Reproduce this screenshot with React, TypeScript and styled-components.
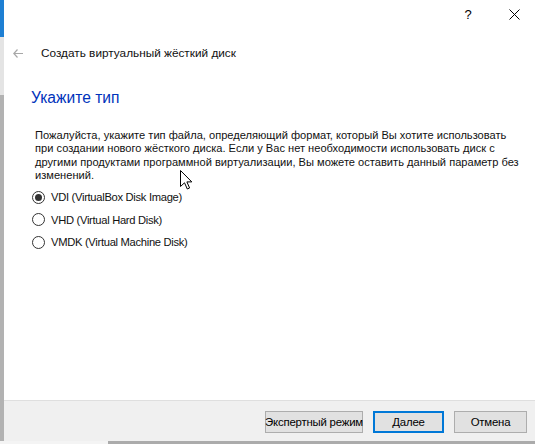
import React from "react";
import styled, { createGlobalStyle } from "styled-components";

const GlobalStyle = createGlobalStyle`
  html, body {
    margin: 0;
    padding: 0;
  }
  body {
    width: 535px;
    height: 444px;
    overflow: hidden;
    background: #ababab;
    font-family: "Liberation Sans", Arial, sans-serif;
    color: #000;
  }
`;

const formats = [
  { id: "vdi", label: "VDI (VirtualBox Disk Image)" },
  { id: "vhd", label: "VHD (Virtual Hard Disk)" },
  { id: "vmdk", label: "VMDK (Virtual Machine Disk)" },
];

const App: React.FC = () => {
  const selected = "vdi";

  return (
    <>
      <GlobalStyle />
      <Screen>
        <MainRow>
          <BackStrip>
            <StripPart $color="#1e7fd3" $height={37} />
            <StripPart $color="#e4e4e4" $height={58} />
            <StripPart $color="#b2b2b2" $height={346} />
          </BackStrip>
          <Dialog>
            <TitleBar>
              <CaptionButton>?</CaptionButton>
              <CaptionButton>
                <svg width="11" height="11" viewBox="0 0 11 11">
                  <path d="M0.5 0.5 L10.5 10.5 M10.5 0.5 L0.5 10.5" stroke="#000" strokeWidth="1" />
                </svg>
              </CaptionButton>
            </TitleBar>
            <HeaderRow>
              <BackArrow>
                <svg width="10" height="9" viewBox="0 0 10 9">
                  <path d="M4.5 0.5 L0.8 4.5 L4.5 8.5 M0.8 4.5 L10 4.5" stroke="#a8a8a8" strokeWidth="1.2" fill="none" />
                </svg>
              </BackArrow>
              <WizardTitle>Создать виртуальный жёсткий диск</WizardTitle>
            </HeaderRow>
            <Content>
              <PageHeading>Укажите тип</PageHeading>
              <Description>
                Пожалуйста, укажите тип файла, определяющий формат, который Вы хотите использовать
                <br />
                при создании нового жёсткого диска. Если у Вас нет необходимости использовать диск с
                <br />
                другими продуктами программной виртуализации, Вы можете оставить данный параметр без
                <br />
                изменений.
              </Description>
              <RadioList>
                {formats.map((f) => (
                  <RadioRow key={f.id}>
                    <RadioCircle>{f.id === selected && <RadioDot />}</RadioCircle>
                    <RadioLabel>{f.label}</RadioLabel>
                  </RadioRow>
                ))}
              </RadioList>
              <Cursor>
                <svg width="13" height="20" viewBox="0 0 13 20">
                  <path
                    d="M0.5 0.5 L0.5 16.5 L4.5 12.8 L7.3 19 L9.6 18 L6.9 11.9 L11.8 11.9 Z"
                    fill="#fff"
                    stroke="#000"
                    strokeWidth="1"
                    strokeLinejoin="miter"
                  />
                </svg>
              </Cursor>
            </Content>
            <Footer>
              <PushButton $width={98}>Экспертный режим</PushButton>
              <PushButton $width={71} $default>
                Далее
              </PushButton>
              <PushButton $width={73}>Отмена</PushButton>
            </Footer>
          </Dialog>
        </MainRow>
        <BottomStrip />
      </Screen>
    </>
  );
};

const Screen = styled.div`
  display: flex;
  flex-direction: column;
  width: 535px;
  height: 444px;
`;

const MainRow = styled.div`
  display: flex;
  flex-direction: row;
  height: 441px;
`;

const BackStrip = styled.div`
  display: flex;
  flex-direction: column;
  flex-shrink: 0;
  width: 4px;
`;

const StripPart = styled.div<{ $color: string; $height: number }>`
  background: ${(p) => p.$color};
  height: ${(p) => p.$height}px;
`;

const Dialog = styled.div`
  position: relative;
  display: flex;
  flex-direction: column;
  flex: 1;
  min-width: 0;
  overflow: hidden;
  background: #ffffff;
`;

const TitleBar = styled.div`
  display: flex;
  flex-direction: row;
  justify-content: flex-end;
  align-items: center;
  height: 29px;
  padding-right: 1px;
  gap: 6px;
`;

const CaptionButton = styled.div`
  display: flex;
  align-items: center;
  justify-content: center;
  width: 40px;
  height: 29px;
  font-size: 13px;
  color: #000;
`;

const HeaderRow = styled.div`
  display: flex;
  flex-direction: row;
  align-items: center;
  height: 48px;
`;

const BackArrow = styled.div`
  display: flex;
  align-items: center;
  width: 28px;
  padding-left: 9px;
`;

const WizardTitle = styled.div`
  font-size: 11.8px;
  color: #111;
`;

const Content = styled.div`
  position: relative;
  display: flex;
  flex-direction: column;
  flex: 1;
  padding-left: 27px;
`;

const PageHeading = styled.div`
  margin-top: 10px;
  font-size: 15.6px;
  line-height: 21px;
  color: #0033bb;
`;

const Description = styled.div`
  margin-top: 21px;
  padding-left: 4px;
  font-size: 11.1px;
  line-height: 13.3px;
  white-space: nowrap;
  color: #111;
`;

const RadioList = styled.div`
  display: flex;
  flex-direction: column;
  margin-top: 4px;
  padding-left: 1px;
`;

const RadioRow = styled.div`
  display: flex;
  flex-direction: row;
  align-items: center;
  height: 22.5px;
`;

const RadioCircle = styled.div`
  display: flex;
  align-items: center;
  justify-content: center;
  box-sizing: border-box;
  width: 13px;
  height: 13px;
  border: 1px solid #333333;
  border-radius: 50%;
  background: #fff;
`;

const RadioDot = styled.div`
  width: 7px;
  height: 7px;
  border-radius: 50%;
  background: #333333;
`;

const RadioLabel = styled.div`
  margin-left: 6px;
  font-size: 11.2px;
  letter-spacing: -0.3px;
  color: #111;
`;

const Cursor = styled.div`
  position: absolute;
  left: 176px;
  top: 93px;
  width: 13px;
  height: 20px;
`;

const Footer = styled.div`
  display: flex;
  flex-direction: row;
  justify-content: flex-end;
  align-items: flex-start;
  gap: 10px;
  height: 41px;
  box-sizing: border-box;
  padding: 10px 8px 0 0;
  border-top: 1px solid #dfdfdf;
  background: #f0f0f0;
`;

const PushButton = styled.div<{ $default?: boolean; $width: number }>`
  display: flex;
  align-items: center;
  justify-content: center;
  box-sizing: border-box;
  width: ${(p) => p.$width}px;
  height: 22px;
  font-size: 11.4px;
  letter-spacing: -0.2px;
  white-space: nowrap;
  background: #e1e1e1;
  border: ${(p) => (p.$default ? "2px solid #0078d7" : "1px solid #adadad")};
`;

const BottomStrip = styled.div`
  height: 3px;
  background: linear-gradient(to right, #f4f4f4 108px, #ababab 108px);
`;

export default App;
